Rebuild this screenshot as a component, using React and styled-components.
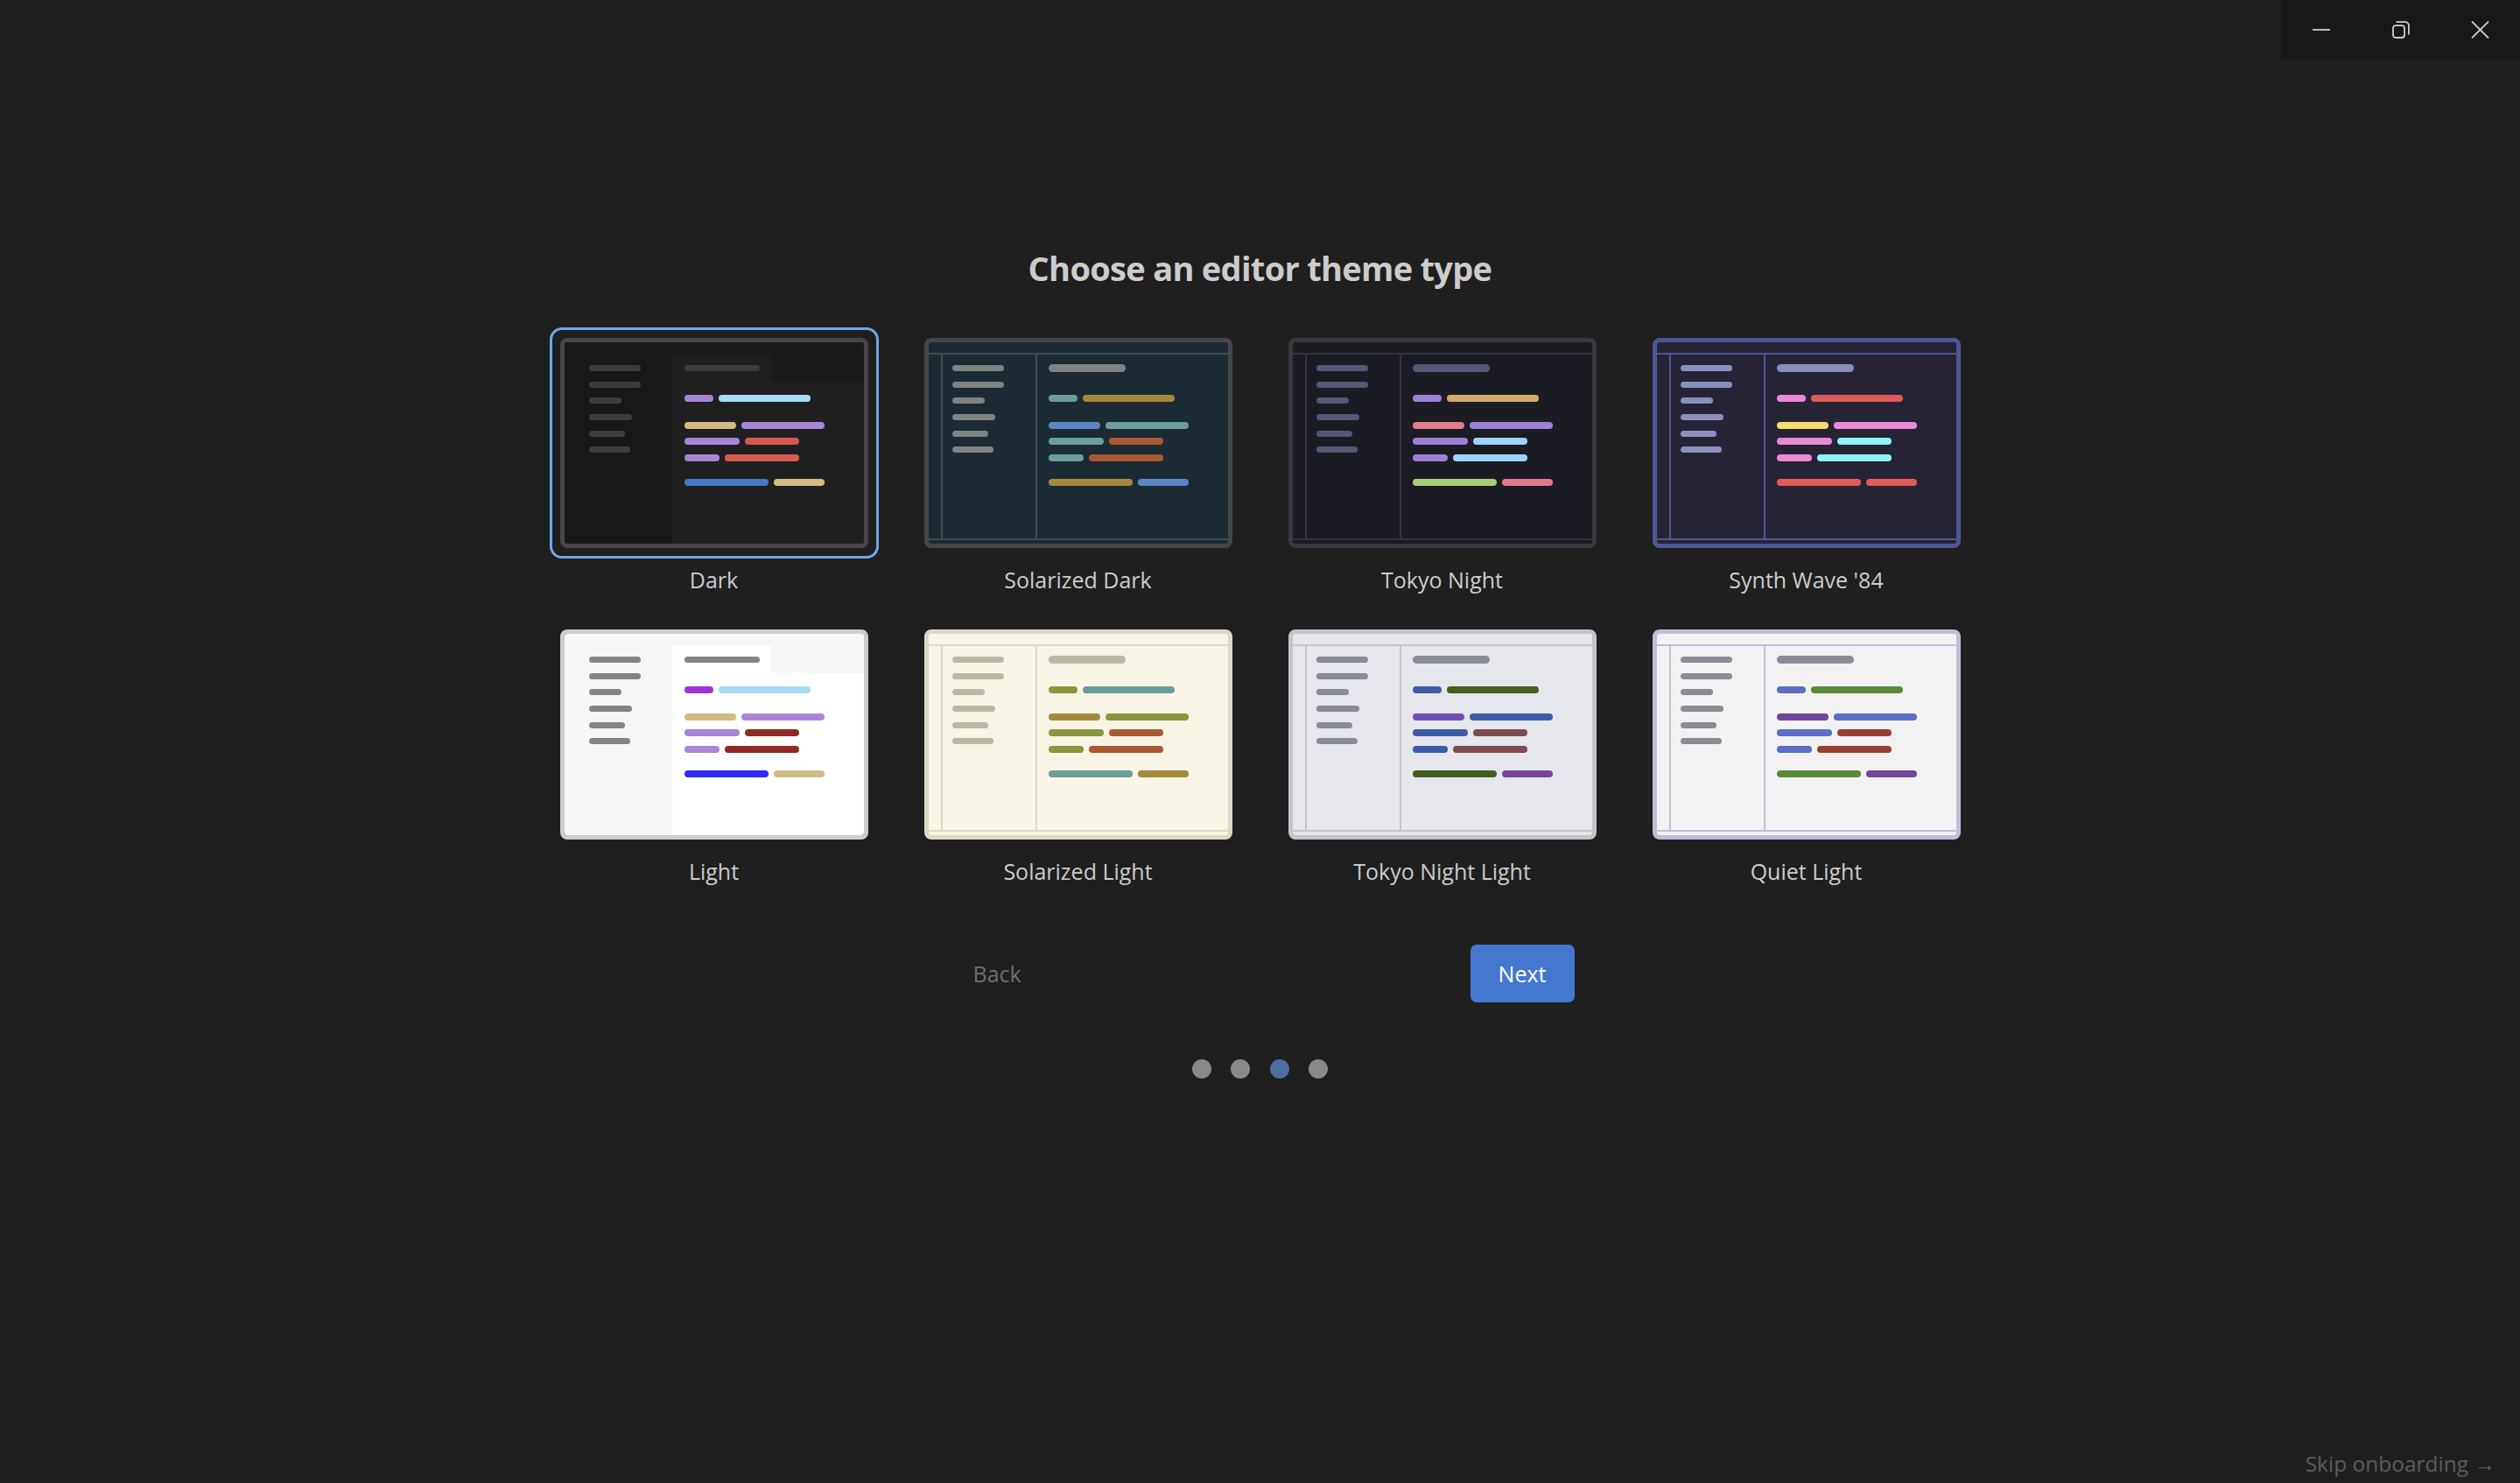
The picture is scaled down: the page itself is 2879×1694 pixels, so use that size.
import React, { useState } from 'react'
import styled, { createGlobalStyle } from 'styled-components'

const GlobalStyle = createGlobalStyle`
  html, body {
    margin: 0;
    padding: 0;
    background: #1f1f1f;
  }
  body {
    font-family: "Open Sans", "Noto Sans", sans-serif;
    color: #cccccc;
    overflow: hidden;
  }
  * { box-sizing: border-box; }
`

// widths of the fake code / explorer lines, same for every preview
const SIDE_WIDTHS = [59, 59, 37, 49, 41, 47]
const CODE_WIDTHS = [[33, 105], [59, 95], [63, 62], [40, 85], [96, 58]]
const LINE_GAPS = [0, 23, 10.67, 10.67, 20]

const themes = [
  {
    name: 'Dark', kind: 'tabs', frame: '#474747', side: '#181818', editor: '#1f1f1f', strip: '#1a1a1a', muted: '#3d3d3d',
    code: ['#a785d6', '#a6dcfa', '#d4bb84', '#a785d6', '#a785d6', '#d65a50', '#a785d6', '#d65a50', '#4279c5', '#d4bb84'],
  },
  {
    name: 'Solarized Dark', kind: 'panes', frame: '#464646', bg: '#1c2a33', line: '#3e4b52', muted: '#7f8482',
    code: ['#6b9f96', '#a4893b', '#5b86c5', '#6b9f96', '#6b9f96', '#aa5733', '#6b9f96', '#aa5733', '#a4893b', '#5b86c5'],
  },
  {
    name: 'Tokyo Night', kind: 'panes', frame: '#38383e', bg: '#1b1b24', line: '#34343e', muted: '#535875',
    code: ['#9d80d6', '#d5ab6b', '#e07b8c', '#9d80d6', '#9d80d6', '#9ed3fd', '#9d80d6', '#9ed3fd', '#a5cd74', '#e07b8c'],
  },
  {
    name: "Synth Wave '84", kind: 'panes', frame: '#4c5796', bg: '#262335', line: '#4c5796', muted: '#8b8fbd',
    code: ['#e88ad6', '#e05a56', '#f3de6e', '#e88ad6', '#e88ad6', '#8bf5f3', '#e88ad6', '#8bf5f3', '#e05a56', '#e05a56'],
  },
  {
    name: 'Light', kind: 'tabs', frame: '#cdcdcd', side: '#f7f7f7', editor: '#ffffff', strip: '#f7f7f7', muted: '#848484',
    code: ['#a032d6', '#a6dcfa', '#d2ba84', '#a886d4', '#a886d4', '#8e2a22', '#a886d4', '#8e2a22', '#2c2cf5', '#d2ba84'],
  },
  {
    name: 'Solarized Light', kind: 'panes', frame: '#dcd8c8', bg: '#f8f4e6', line: '#dcd8c8', muted: '#bcb8a7',
    code: ['#8b953f', '#6b9e98', '#a58a3d', '#8b953f', '#8b953f', '#a85833', '#8b953f', '#a85833', '#6b9e98', '#a58a3d'],
  },
  {
    name: 'Tokyo Night Light', kind: 'panes', frame: '#c4c5cb', bg: '#e6e7ed', line: '#c4c5cb', muted: '#8a8c93',
    code: ['#3e5ca5', '#425f20', '#7050b5', '#3e5ca5', '#3e5ca5', '#7e4a51', '#3e5ca5', '#7e4a51', '#425f20', '#74479b'],
  },
  {
    name: 'Quiet Light', kind: 'panes', frame: '#c5bbd7', bg: '#f2f2f2', line: '#c5bbd7', muted: '#8a8c93',
    code: ['#596ec4', '#5b8b39', '#71479a', '#596ec4', '#596ec4', '#984036', '#596ec4', '#984036', '#5b8b39', '#71479a'],
  },
]

const Page = styled.div`
  height: 100vh;
  display: flex;
  flex-direction: column;
  align-items: center;
`

const TopBar = styled.div`
  align-self: stretch;
  height: 68px;
  display: flex;
  justify-content: flex-end;
`

const WindowControls = styled.div`
  display: flex;
  background: #181818;
`

const WinButton = styled.button`
  width: 91px;
  height: 68px;
  border: none;
  background: transparent;
  color: #cfcfcf;
  display: flex;
  align-items: center;
  justify-content: center;
  padding: 0;
  cursor: pointer;
  svg { display: block; }
`

const Title = styled.h1`
  margin: 212px 0 0;
  font-size: 38px;
  line-height: 52px;
  font-weight: 700;
  letter-spacing: -0.7px;
  color: #cccccc;
`

const Grid = styled.div`
  margin-top: 42px;
  display: grid;
  grid-template-columns: repeat(4, 376px);
  column-gap: 40px;
  row-gap: 27px;
`

const Card = styled.div`
  display: flex;
  flex-direction: column;
  align-items: center;
  cursor: pointer;
`

const Ring = styled.div`
  padding: 9px;
  border: 3px solid ${(p) => (p.$selected ? '#6ea6ef' : 'transparent')};
  border-radius: 14px;
`

const Frame = styled.div`
  width: 352px;
  height: 240px;
  border: 5px solid ${(p) => p.$frame};
  border-radius: 8px;
  overflow: hidden;
  display: flex;
  flex-direction: ${(p) => (p.$column ? 'column' : 'row')};
  background: ${(p) => p.$bg || 'transparent'};
`

const Label = styled.div`
  margin-top: 6px;
  font-size: 25px;
  line-height: 36px;
  color: #cccccc;
`

const Pill = styled.div`
  width: ${(p) => p.$w}px;
  height: ${(p) => p.$h || 8}px;
  border-radius: 999px;
  background: ${(p) => p.$color};
  flex: none;
`

/* "tabs" style preview (Dark / Light) */
const TabSidebar = styled.div`
  width: 123px;
  background: ${(p) => p.$bg};
  padding: 25.8px 0 0 28px;
  display: flex;
  flex-direction: column;
  gap: 11.73px;
`

const TabEditor = styled.div`
  flex: 1;
  background: ${(p) => p.$bg};
  display: flex;
  flex-direction: column;
`

const TabStrip = styled.div`
  height: 45px;
  background: ${(p) => p.$bg};
  display: flex;
  align-items: flex-end;
`

const Tab = styled.div`
  width: 113px;
  height: 31px;
  background: ${(p) => p.$bg};
  padding-left: 14px;
  display: flex;
  align-items: center;
`

/* "panes" style preview */
const WinTitle = styled.div`
  height: 14px;
  flex: none;
  border-bottom: 2px solid ${(p) => p.$line};
`

const PaneBody = styled.div`
  flex: 1;
  display: flex;
`

const ActivityBar = styled.div`
  width: 16px;
  flex: none;
  border-right: 2px solid ${(p) => p.$line};
`

const PaneSidebar = styled.div`
  width: 108px;
  flex: none;
  border-right: 2px solid ${(p) => p.$line};
  padding: 11.8px 0 0 11px;
  display: flex;
  flex-direction: column;
  gap: 11.73px;
`

const PaneEditor = styled.div`
  flex: 1;
  padding: 11.2px 0 0 13px;
  display: flex;
  flex-direction: column;
  align-items: flex-start;
`

const StatusBar = styled.div`
  height: 6px;
  flex: none;
  border-top: 2px solid ${(p) => p.$line};
`

const Code = styled.div`
  padding: ${(p) => p.$top}px 0 0 ${(p) => p.$left}px;
  display: flex;
  flex-direction: column;
`

const CodeLine = styled.div`
  display: flex;
  gap: 6px;
  margin-top: ${(p) => p.$gap}px;
`

const Footer = styled.div`
  align-self: stretch;
  margin-top: auto;
  padding: 0 28px 4px 0;
  text-align: right;
  font-size: 24.5px;
  line-height: 36px;
  color: #5c5c5c;
  cursor: pointer;
`

const Actions = styled.div`
  margin-top: 66px;
  width: 718px;
  display: flex;
  justify-content: space-between;
  align-items: center;
`

const BackButton = styled.button`
  height: 66px;
  padding: 0 31px;
  border: none;
  background: transparent;
  font-family: inherit;
  font-size: 25px;
  color: #6e6e6e;
  cursor: pointer;
`

const NextButton = styled.button`
  width: 119px;
  height: 66px;
  border: none;
  border-radius: 7px;
  background: #4478ce;
  font-family: inherit;
  font-size: 25px;
  color: #ffffff;
  cursor: pointer;
`

const Dots = styled.div`
  margin-top: 65px;
  display: flex;
  gap: 22.4px;
`

const Dot = styled.div`
  width: 22px;
  height: 22px;
  border-radius: 50%;
  background: ${(p) => (p.$active ? '#4c6f9f' : '#898989')};
`

function CodeBlock({ theme, top, left }) {
  return (
    <Code $top={top} $left={left}>
      {CODE_WIDTHS.map((pair, i) => (
        <CodeLine key={i} $gap={LINE_GAPS[i]}>
          <Pill $w={pair[0]} $color={theme.code[i * 2]} />
          <Pill $w={pair[1]} $color={theme.code[i * 2 + 1]} />
        </CodeLine>
      ))}
    </Code>
  )
}

function Preview({ theme }) {
  if (theme.kind === 'tabs') {
    return (
      <Frame $frame={theme.frame}>
        <TabSidebar $bg={theme.side}>
          {SIDE_WIDTHS.map((w, i) => <Pill key={i} $w={w} $h={7} $color={theme.muted} />)}
        </TabSidebar>
        <TabEditor $bg={theme.editor}>
          <TabStrip $bg={theme.strip}>
            <Tab $bg={theme.editor}>
              <Pill $w={86} $h={7} $color={theme.muted} />
            </Tab>
          </TabStrip>
          <CodeBlock theme={theme} top={14.7} left={14} />
        </TabEditor>
      </Frame>
    )
  }
  return (
    <Frame $frame={theme.frame} $bg={theme.bg} $column>
      <WinTitle $line={theme.line} />
      <PaneBody>
        <ActivityBar $line={theme.line} />
        <PaneSidebar $line={theme.line}>
          {SIDE_WIDTHS.map((w, i) => <Pill key={i} $w={w} $h={7} $color={theme.muted} />)}
        </PaneSidebar>
        <PaneEditor>
          <Pill $w={88} $h={9} $color={theme.muted} />
          <CodeBlock theme={theme} top={25.5} left={0} />
        </PaneEditor>
      </PaneBody>
      <StatusBar $line={theme.line} />
    </Frame>
  )
}

const MinimizeIcon = () => (
  <svg width="20" height="20" viewBox="0 0 20 20" fill="none" stroke="currentColor" strokeWidth="1.8">
    <path d="M0 10h20" />
  </svg>
)

const RestoreIcon = () => (
  <svg width="20" height="20" viewBox="0 0 20 20" fill="none" stroke="currentColor" strokeWidth="1.8">
    <rect x="1" y="5.2" width="13" height="13.8" rx="3" />
    <path d="M4.6 1.2H15a3.9 3.9 0 0 1 3.9 3.9V15.4" />
  </svg>
)

const CloseIcon = () => (
  <svg width="21" height="20" viewBox="0 0 21 20" fill="none" stroke="currentColor" strokeWidth="1.8">
    <path d="M1 0.5L20 19.5M20 0.5L1 19.5" />
  </svg>
)

export default function App() {
  const [selected, setSelected] = useState('Dark')

  return (
    <>
      <GlobalStyle />
      <Page>
        <TopBar>
          <WindowControls>
            <WinButton aria-label="Minimize"><MinimizeIcon /></WinButton>
            <WinButton aria-label="Restore"><RestoreIcon /></WinButton>
            <WinButton aria-label="Close"><CloseIcon /></WinButton>
          </WindowControls>
        </TopBar>

        <Title>Choose an editor theme type</Title>

        <Grid>
          {themes.map((t) => (
            <Card key={t.name} onClick={() => setSelected(t.name)}>
              <Ring $selected={selected === t.name}>
                <Preview theme={t} />
              </Ring>
              <Label>{t.name}</Label>
            </Card>
          ))}
        </Grid>

        <Actions>
          <BackButton>Back</BackButton>
          <NextButton>Next</NextButton>
        </Actions>

        <Dots>
          {[0, 1, 2, 3].map((i) => <Dot key={i} $active={i === 2} />)}
        </Dots>

        <Footer>Skip onboarding →</Footer>
      </Page>
    </>
  )
}
